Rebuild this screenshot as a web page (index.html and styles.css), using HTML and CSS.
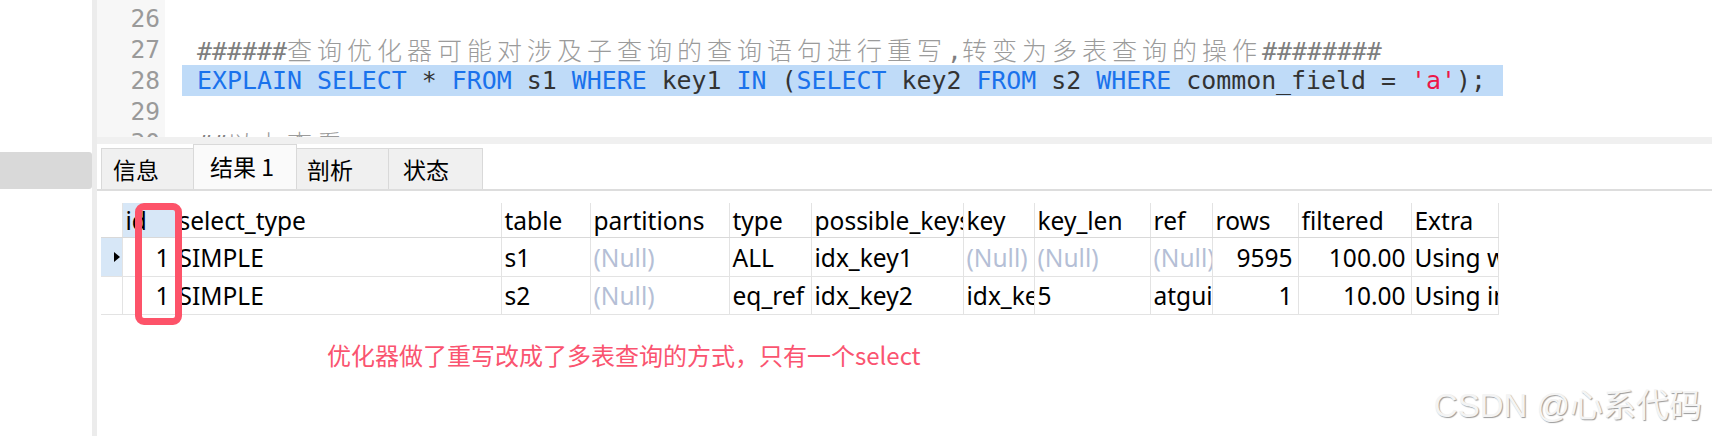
FILE: index.html
```html
<!DOCTYPE html>
<html lang="zh-CN">
<head>
<meta charset="utf-8">
<title>Navicat - EXPLAIN</title>
<link rel="stylesheet" href="styles.css">
</head>
<body>
<div class="app">
  <aside class="nav"><div class="nav-item"></div></aside>
  <div class="divider"></div>
  <main class="main">
    <section class="editor">
      <div class="gutter">
        <div class="num">26</div>
        <div class="num">27</div>
        <div class="num">28</div>
        <div class="num">29</div>
        <div class="num">30</div>
      </div>
      <div class="code">
        <div class="line"><span class="txt"> </span></div>
        <div class="line"><span class="txt"><span class="hash">######</span><span class="cjk">查询优化器可能对涉及子查询的查询语句进行重写</span><span class="hash">,</span><span class="cjk">转变为多表查询的操作</span><span class="hash">########</span></span></div>
        <div class="line"><span class="txt sel"><span class="kw">EXPLAIN</span> <span class="kw">SELECT</span> * <span class="kw">FROM</span> s1 <span class="kw">WHERE</span> key1 <span class="kw">IN</span> (<span class="kw">SELECT</span> key2 <span class="kw">FROM</span> s2 <span class="kw">WHERE</span> common_field = <span class="str">'a'</span>);</span></div>
        <div class="line"><span class="txt"> </span></div>
        <div class="line"><span class="txt"><span class="hash">##</span><span class="cjk">以上查看</span></span></div>
      </div>
    </section>
    <div class="strip"></div>
    <nav class="tabs">
      <div class="tab tab-a">信息</div>
      <div class="tab tab-b active">结果 1</div>
      <div class="tab tab-c">剖析</div>
      <div class="tab tab-d">状态</div>
    </nav>
    <section class="result">
      <table class="grid">
        <colgroup>
          <col class="c-ind"><col class="c-id"><col class="c-st"><col class="c-tb"><col class="c-pt"><col class="c-ty"><col class="c-pk"><col class="c-k"><col class="c-kl"><col class="c-ref"><col class="c-rows"><col class="c-f"><col class="c-ex">
        </colgroup>
        <thead>
          <tr>
            <th class="ind"></th>
            <th class="idh">id</th>
            <th>select_type</th>
            <th>table</th>
            <th>partitions</th>
            <th>type</th>
            <th>possible_keys</th>
            <th>key</th>
            <th>key_len</th>
            <th>ref</th>
            <th>rows</th>
            <th>filtered</th>
            <th>Extra</th>
          </tr>
        </thead>
        <tbody>
          <tr class="r1">
            <td class="ind cur"><span class="caret"></span></td>
            <td class="num-c">1</td>
            <td>SIMPLE</td>
            <td>s1</td>
            <td class="null">(Null)</td>
            <td>ALL</td>
            <td>idx_key1</td>
            <td class="null">(Null)</td>
            <td class="null">(Null)</td>
            <td class="null">(Null)</td>
            <td class="num-c">9595</td>
            <td class="num-c">100.00</td>
            <td>Using where</td>
          </tr>
          <tr class="r2">
            <td class="ind"></td>
            <td class="num-c">1</td>
            <td>SIMPLE</td>
            <td>s2</td>
            <td class="null">(Null)</td>
            <td>eq_ref</td>
            <td>idx_key2</td>
            <td>idx_key2</td>
            <td>5</td>
            <td>atguigudb1.s1.key1</td>
            <td class="num-c">1</td>
            <td class="num-c">10.00</td>
            <td>Using index</td>
          </tr>
        </tbody>
      </table>
      <p class="note">优化器做了重写改成了多表查询的方式，只有一个select</p>
    </section>
  </main>
</div>
<div class="mark-box"></div>
<div class="watermark">CSDN @心系代码</div>
</body>
</html>
```
FILE: styles.css
```css
html, body {
  margin: 0;
  padding: 0;
}
body {
  width: 1712px;
  height: 436px;
  overflow: hidden;
  background: #ffffff;
  position: relative;
  font-family: "Noto Sans", "Noto Sans CJK SC", sans-serif;
}
.app {
  display: flex;
  height: 436px;
}
.nav {
  width: 92px;
  flex: none;
  background: #ffffff;
}
.nav-item {
  margin-top: 152px;
  height: 37px;
  background: #d9d9d9;
  border-radius: 0 3px 3px 0;
}
.divider {
  width: 5px;
  flex: none;
  background: #ececec;
}
.main {
  flex: 1;
  display: flex;
  flex-direction: column;
  min-width: 0;
}
.editor {
  height: 137px;
  flex: none;
  display: flex;
  overflow: hidden;
  background: #ffffff;
}
.gutter {
  width: 68px;
  flex: none;
  box-sizing: border-box;
  background: #f7f7f7;
  padding: 3px 5px 0 0;
  text-align: right;
  font-family: "DejaVu Sans Mono", monospace;
  font-size: 24.5px;
  line-height: 31px;
  color: #9a9a9a;
}
.code {
  flex: 1;
  padding: 3px 0 0 17px;
  font-family: "DejaVu Sans Mono", "Noto Sans CJK SC", monospace;
  font-size: 24.9px;
  line-height: 31px;
  color: #333333;
}
.line {
  height: 31px;
  white-space: pre;
}
.txt {
  display: inline-block;
  height: 31px;
  padding-left: 15px;
}
.txt.sel {
  background: #bfdbf8;
  padding-right: 17px;
}
.hash {
  color: #7f7f7f;
}
.cjk {
  font-family: "Noto Sans CJK SC", sans-serif;
  font-size: 25px;
  letter-spacing: 5px;
  color: #9b9b9b;
  font-weight: 300;
}
.kw {
  color: #1a72ec;
}
.str {
  color: #ec1648;
}
.strip {
  height: 7px;
  flex: none;
  background: #f0f0f0;
}
.tabs {
  height: 45px;
  flex: none;
  display: flex;
  align-items: flex-end;
  padding-left: 4px;
  border-bottom: 2px solid #dddddd;
  background: #ffffff;
}
.tab {
  box-sizing: border-box;
  height: 41px;
  padding-left: 11px;
  background: #f0f0f0;
  border: 1px solid #d9d9d9;
  border-bottom: none;
  margin-right: -1px;
  font-family: "Noto Sans CJK SC", sans-serif;
  font-size: 23px;
  line-height: 40px;
  color: #000000;
}
.tab.active {
  height: 45px;
  line-height: 43px;
  padding-left: 16px;
  background: #fafafa;
}
.tab-a { width: 93px; }
.tab-b { width: 104px; }
.tab-c { width: 93px; padding-left: 10px; }
.tab-d { width: 95px; padding-left: 14px; }
.result {
  flex: 1;
  padding: 12px 0 0 4px;
}
.grid {
  border-collapse: collapse;
  table-layout: fixed;
  width: 1397px;
  font-family: "Noto Sans", "Noto Sans CJK SC", sans-serif;
  font-size: 24.5px;
  color: #000000;
}
.c-ind { width: 21px; }
.c-id { width: 53px; }
.c-st { width: 326px; }
.c-tb { width: 89px; }
.c-pt { width: 139px; }
.c-ty { width: 82px; }
.c-pk { width: 152px; }
.c-k { width: 71px; }
.c-kl { width: 116px; }
.c-ref { width: 62px; }
.c-rows { width: 86px; }
.c-f { width: 113px; }
.c-ex { width: 87px; }
.grid th, .grid td {
  padding: 0 2px 0 3px;
  white-space: nowrap;
  overflow: hidden;
  text-overflow: clip;
  text-align: left;
  font-weight: 400;
  border-right: 1px solid #e3e3e3;
  border-bottom: 1px solid #e3e3e3;
}
.grid thead th {
  height: 34px;
  border-bottom-color: #d9d9d9;
}
.grid tbody .r1 td { height: 38px; }
.grid tbody .r2 td { height: 37px; }
.grid .ind {
  padding: 0;
}
.grid .idh {
  background: #d7e7f7;
}
.grid .cur {
  background: #d7e7f7;
}
.caret {
  display: block;
  margin-left: 13px;
  width: 0;
  height: 0;
  border-top: 5px solid transparent;
  border-bottom: 5px solid transparent;
  border-left: 6px solid #000000;
}
.grid .num-c {
  text-align: right;
  padding-right: 5px;
}
.grid .null {
  color: #b5bfd6;
}
.note {
  margin: 24px 0 0 226px;
  font-family: "Noto Sans CJK SC", sans-serif;
  font-size: 24px;
  line-height: 32px;
  color: #fa5470;
}
.mark-box {
  position: absolute;
  left: 135px;
  top: 203px;
  width: 47px;
  height: 122px;
  box-sizing: border-box;
  border: 7px solid #fd5369;
  border-radius: 9px;
}
.watermark {
  position: absolute;
  right: 10px;
  bottom: 14px;
  font-family: "Liberation Sans", "Noto Sans CJK SC", sans-serif;
  font-size: 33px;
  line-height: 1;
  color: #f4f4f4;
  text-shadow: 1px 1px 1px #9a9a9a, -1px -1px 0 #ffffff;
}
```
